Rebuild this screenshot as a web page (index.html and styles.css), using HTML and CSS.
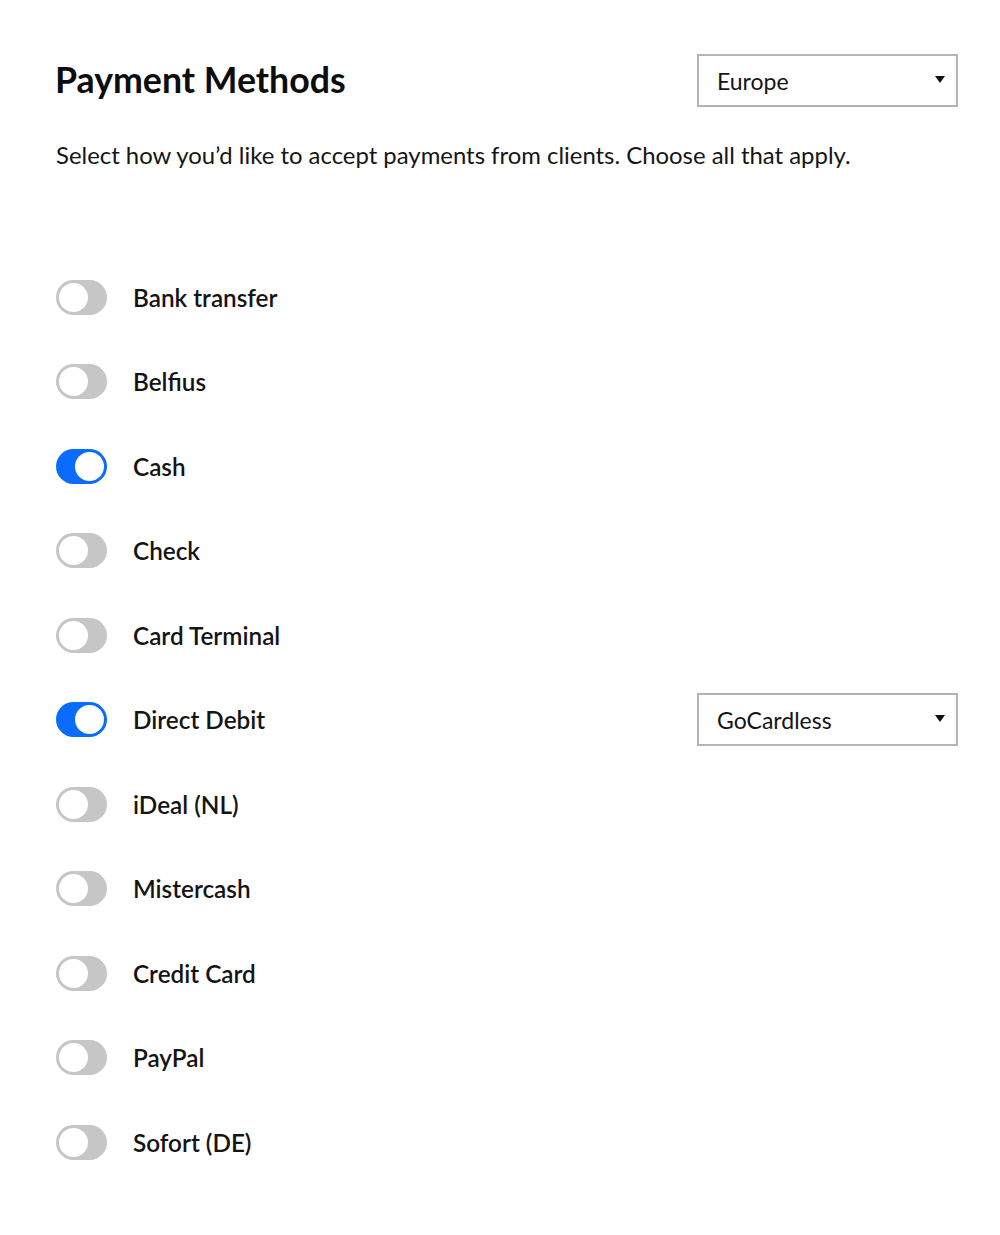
FILE: index.html
```html
<!DOCTYPE html>
<html lang="en">
<head>
<meta charset="utf-8">
<title>Payment Methods</title>
<link rel="stylesheet" href="styles.css">
</head>
<body>
<div class="page">
  <div class="header">
    <h1 class="title">Payment Methods</h1>
    <div class="select">
      <span class="select-value">Europe</span>
      <span class="caret"></span>
    </div>
  </div>
  <p class="intro">Select how you’d like to accept payments from clients. Choose all that apply.</p>
  <ul class="methods">
    <li class="method"><span class="toggle"><span class="knob"></span></span><span class="label">Bank transfer</span></li>
    <li class="method"><span class="toggle"><span class="knob"></span></span><span class="label">Belfius</span></li>
    <li class="method"><span class="toggle on"><span class="knob"></span></span><span class="label">Cash</span></li>
    <li class="method"><span class="toggle"><span class="knob"></span></span><span class="label">Check</span></li>
    <li class="method"><span class="toggle"><span class="knob"></span></span><span class="label">Card Terminal</span></li>
    <li class="method"><span class="toggle on"><span class="knob"></span></span><span class="label">Direct Debit</span>
      <div class="select select-inline">
        <span class="select-value">GoCardless</span>
        <span class="caret"></span>
      </div>
    </li>
    <li class="method"><span class="toggle"><span class="knob"></span></span><span class="label">iDeal (NL)</span></li>
    <li class="method"><span class="toggle"><span class="knob"></span></span><span class="label">Mistercash</span></li>
    <li class="method"><span class="toggle"><span class="knob"></span></span><span class="label">Credit Card</span></li>
    <li class="method"><span class="toggle"><span class="knob"></span></span><span class="label">PayPal</span></li>
    <li class="method"><span class="toggle"><span class="knob"></span></span><span class="label">Sofort (DE)</span></li>
  </ul>
</div>
</body>
</html>
```
FILE: styles.css
```css
* { box-sizing: border-box; }
html, body { margin: 0; padding: 0; background: #fff; }
body {
  font-family: Lato, "Open Sans", "Liberation Sans", sans-serif;
  color: #111;
}
.page {
  padding: 54px 42px 0 56px;
}
.header {
  display: flex;
  align-items: center;
  justify-content: space-between;
}
.title {
  margin: -3px 0 0 -1px;
  font-size: 35.7px;
  font-weight: 700;
  color: #0d0d0d;
}
.select {
  width: 261px;
  height: 53px;
  border: 2px solid #b4b4b4;
  display: flex;
  align-items: center;
  justify-content: space-between;
  padding: 0 11px 0 18px;
  background: #fff;
}
.select-value {
  font-size: 23px;
  color: #151515;
}
.caret {
  width: 0;
  height: 0;
  border-left: 5px solid transparent;
  border-right: 5px solid transparent;
  border-top: 7px solid #111;
  margin-top: -2px;
}
.intro {
  margin: 33px 0 0 0;
  font-size: 23.9px;
  color: #151515;
}
.methods {
  list-style: none;
  margin: 111px 0 0 0;
  padding: 0;
  display: flex;
  flex-direction: column;
  gap: 50px;
}
.method {
  display: flex;
  align-items: center;
  height: 34.5px;
}
.toggle {
  width: 51px;
  height: 35px;
  border-radius: 18px;
  background: #c6c6c6;
  position: relative;
  flex: none;
}
.knob {
  position: absolute;
  top: 3px;
  left: 3px;
  width: 29px;
  height: 29px;
  border-radius: 50%;
  background: #fff;
}
.toggle.on { background: #0a6cff; }
.toggle.on .knob { left: auto; right: 3px; }
.label {
  margin-left: 26px;
  font-size: 24.3px;
  font-weight: 600;
  color: #141414;
}
.select-inline {
  margin-left: auto;
}
```
